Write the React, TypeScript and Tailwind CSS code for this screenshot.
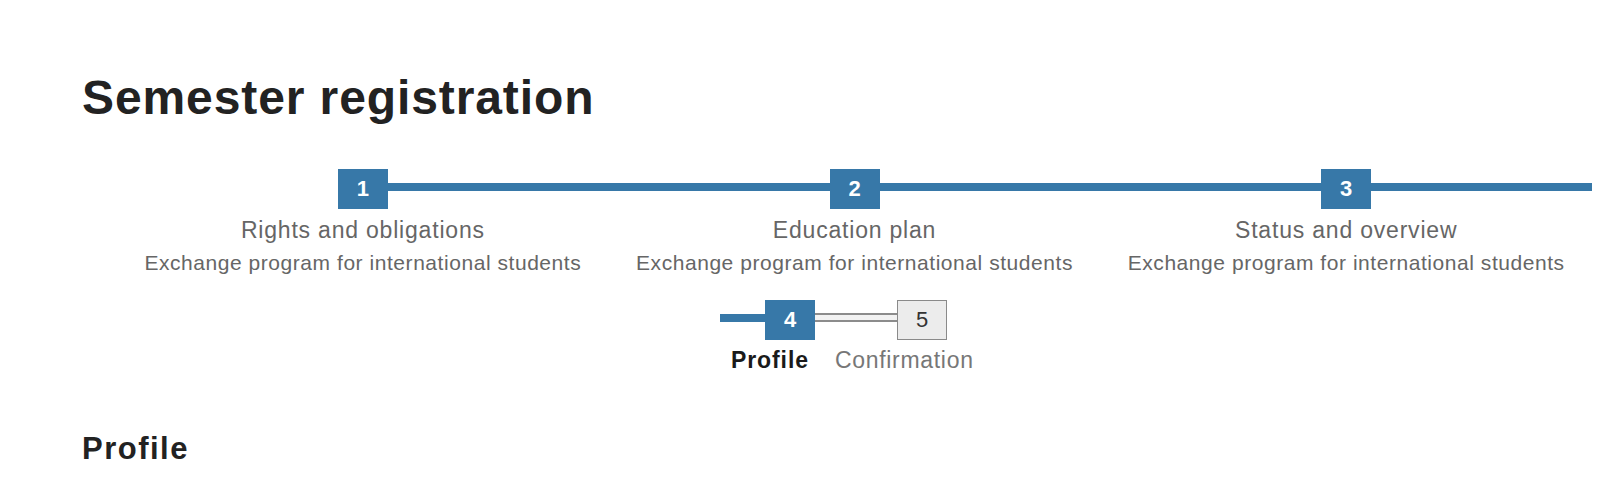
import React from "react";

const BLUE = "bg-[#3778a8]";

type Seg = "none" | "blue" | "gray";

function Segment({ kind, w }: { kind: Seg; w?: string }) {
  const size = w ?? "flex-1";
  if (kind === "blue") return <div className={`${size} mt-[14px] h-[8px] ${BLUE}`} />;
  if (kind === "gray")
    return <div className={`${size} mt-[13px] h-[9px] border-y-2 border-[#8c8c8c] bg-[#f2f2f2]`} />;
  return <div className={size} />;
}

function Box({ n, done }: { n: number; done: boolean }) {
  return done ? (
    <div className={`shrink-0 w-[50px] h-[40px] ${BLUE} flex items-center justify-center text-white font-bold text-[22px] leading-none`}>
      {n}
    </div>
  ) : (
    <div className="shrink-0 w-[50px] h-[40px] bg-[#ececec] border border-[#8a8a8a] flex items-center justify-center text-[#333] text-[22px] leading-none">
      {n}
    </div>
  );
}

const bigSteps = [
  { n: 1, title: "Rights and obligations", left: "none" as Seg, right: "blue" as Seg },
  { n: 2, title: "Education plan", left: "blue" as Seg, right: "blue" as Seg },
  { n: 3, title: "Status and overview", left: "blue" as Seg, right: "blue" as Seg },
];

export default function App() {
  return (
    <div
      className="bg-white min-h-[496px] overflow-hidden"
      style={{ fontFamily: "'Liberation Sans', Arial, Helvetica, sans-serif" }}
    >
      <div className="pl-[82px] pt-[74px]">
        <h1 className="text-[48px] leading-[48px] font-bold text-[#222] tracking-[0.9px]">Semester registration</h1>
      </div>

      <div className="ml-[117px] w-[1475px] mt-[47px] flex">
        {bigSteps.map((s) => (
          <div key={s.n} className="flex-1 flex flex-col">
            <div className="flex items-start h-[40px]">
              <Segment kind={s.left} />
              <Box n={s.n} done />
              <Segment kind={s.right} />
            </div>
            <div className="mt-[8px] flex justify-center text-[23px] leading-[26px] text-[#666] tracking-[0.8px] whitespace-nowrap">
              {s.title}
            </div>
            <div className="mt-[8px] flex justify-center text-[21px] leading-[24px] text-[#666] tracking-[0.55px] whitespace-nowrap">
              Exchange program for international students
            </div>
          </div>
        ))}
      </div>

      <div className="ml-[720px] mt-[25px] flex flex-col">
        <div className="flex items-start h-[40px]">
          <Segment kind="blue" w="w-[45px]" />
          <Box n={4} done />
          <Segment kind="gray" w="w-[82px]" />
          <Box n={5} done={false} />
        </div>
        <div className="mt-[7px] ml-[11px] flex gap-[26px] text-[23px] leading-[26px] whitespace-nowrap">
          <span className="font-bold text-[#1a1a1a] tracking-[0.9px]">Profile</span>
          <span className="text-[#777] tracking-[0.7px]">Confirmation</span>
        </div>
      </div>

      <div className="pl-[82px] mt-[58px]">
        <h2 className="text-[31px] leading-[36px] font-bold text-[#222] tracking-[1.5px]">Profile</h2>
      </div>
    </div>
  );
}
